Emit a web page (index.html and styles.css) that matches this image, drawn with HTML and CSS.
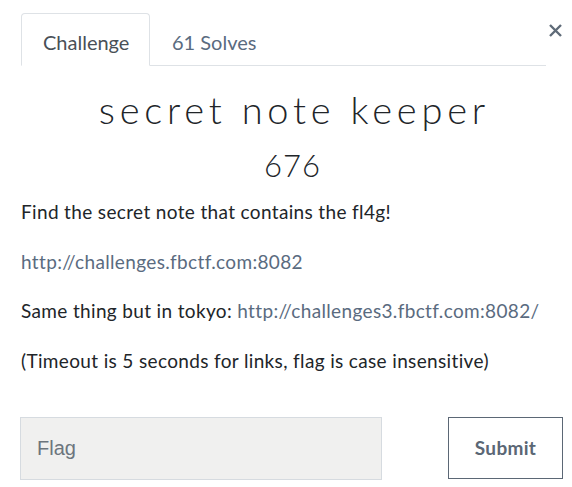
FILE: index.html
```html
<!DOCTYPE html>
<html>
<head>
<meta charset="utf-8">
<link rel="stylesheet" href="styles.css">
</head>
<body>
<div class="modal">
  <div class="head">
    <ul class="tabs">
      <li class="tab active">Challenge</li>
      <li class="tab">61 Solves</li>
    </ul>
    <button class="close" aria-label="Close">
      <svg width="13" height="13" viewBox="0 0 13 13"><path d="M1 1L12 12M12 1L1 12" stroke="#5f6b78" stroke-width="2.4" stroke-linecap="butt"/></svg>
    </button>
  </div>
  <h2 class="title">secret note keeper</h2>
  <h3 class="points">676</h3>
  <div class="desc">
    <p>Find the secret note that contains the fl4g!</p>
    <p><a href="#">http://challenges.fbctf.com:8082</a></p>
    <p>Same thing but in tokyo: <a href="#">http://challenges3.fbctf.com:8082/</a></p>
    <p>(Timeout is 5 seconds for links, flag is case insensitive)</p>
  </div>
  <form class="submit-row">
    <input class="flag" type="text" placeholder="Flag">
    <button class="submit" type="button">Submit</button>
  </form>
</div>
</body>
</html>
```

FILE: styles.css
```css
html, body {
  margin: 0;
  padding: 0;
  background: #ffffff;
}
body {
  font-family: Lato, "Open Sans", sans-serif;
  color: #212529;
}
.modal {
  padding: 13px 9px 0 21px;
}
.head {
  display: flex;
  align-items: flex-start;
}
.tabs {
  list-style: none;
  margin: 0;
  padding: 0;
  display: flex;
  width: 525px;
  border-bottom: 1px solid #dee2e6;
  height: 52px;
}
.tab {
  font-size: 20px;
  color: #5a6b7f;
  padding: 0 21px;
  line-height: 56px;
  height: 52px;
  box-sizing: border-box;
  border: 1px solid transparent;
  border-radius: 4px 4px 0 0;
}
.tab.active {
  color: #495057;
  border-color: #dee2e6 #dee2e6 #ffffff;
  background: #fff;
  height: 53px;
  width: 129px;
}
.close {
  margin: 10px 0 0 2px;
  padding: 0;
  border: 0;
  background: none;
  width: 15px;
  height: 14px;
  display: flex;
  align-items: center;
  justify-content: center;
}
.title {
  margin: 19px 0 0 0;
  padding-left: 4.8px;
  text-align: center;
  font-weight: 300;
  font-size: 38px;
  letter-spacing: 4.8px;
  line-height: 48px;
  color: #212529;
}
.points {
  margin: 14px 0 0 0;
  padding-left: 1px;
  text-align: center;
  font-weight: 300;
  font-size: 31px;
  letter-spacing: 1px;
  line-height: 36px;
  color: #212529;
}
.desc {
  margin-top: 18px;
}
.desc p {
  margin: 0 0 27.5px 0;
  font-size: 19px;
  letter-spacing: 0.35px;
  line-height: 22px;
}
.desc p:last-child {
  margin-bottom: 0;
}
.desc a {
  color: #5a6b7f;
  text-decoration: none;
}
.submit-row {
  display: flex;
  margin: 45px 0 0 0;
  gap: 66px;
}
.flag {
  width: 362px;
  height: 63px;
  box-sizing: border-box;
  margin-left: -1px;
  background: #f0f0ef;
  border: 1px solid #d6dbe0;
  padding: 0 16px;
  font-family: "Liberation Sans", Arial, sans-serif;
  font-size: 20px;
  color: #495057;
}
.flag::placeholder {
  color: #6c757d;
}
.submit {
  width: 115px;
  height: 62px;
  box-sizing: border-box;
  background: #fff;
  border: 1px solid #5b6775;
  font-family: Lato, sans-serif;
  font-weight: 700;
  font-size: 19px;
  letter-spacing: 0.3px;
  color: #5b6775;
}
```
